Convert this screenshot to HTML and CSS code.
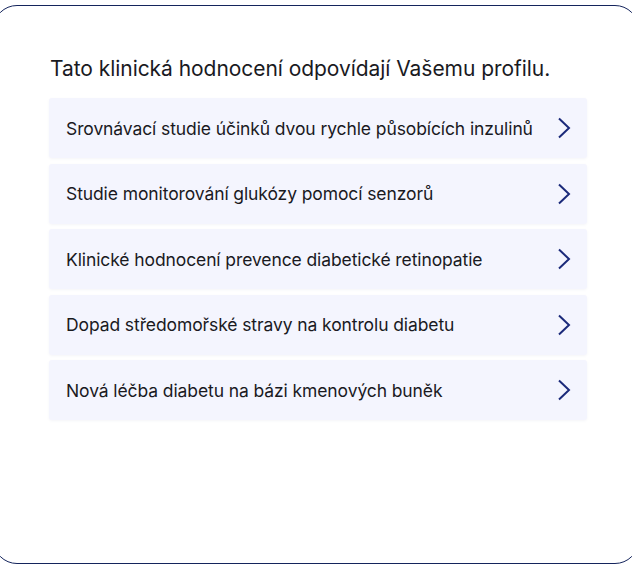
FILE: index.html
```html
<!DOCTYPE html>
<html lang="cs">
<head>
<meta charset="utf-8">
<link rel="stylesheet" href="styles.css">
</head>
<body>
<div class="card">
  <h1 class="title">Tato klinická hodnocení odpovídají Vašemu profilu.</h1>
  <ul class="list">
    <li class="item"><span>Srovnávací studie účinků dvou rychle působících inzulinů</span><svg class="chev" width="14" height="22" viewBox="0 0 14 22"><path d="M2 1.5 L12 11 L2 20.5" fill="none" stroke="#1b2a7a" stroke-width="2"/></svg></li>
    <li class="item"><span>Studie monitorování glukózy pomocí senzorů</span><svg class="chev" width="14" height="22" viewBox="0 0 14 22"><path d="M2 1.5 L12 11 L2 20.5" fill="none" stroke="#1b2a7a" stroke-width="2"/></svg></li>
    <li class="item"><span>Klinické hodnocení prevence diabetické retinopatie</span><svg class="chev" width="14" height="22" viewBox="0 0 14 22"><path d="M2 1.5 L12 11 L2 20.5" fill="none" stroke="#1b2a7a" stroke-width="2"/></svg></li>
    <li class="item"><span>Dopad středomořské stravy na kontrolu diabetu</span><svg class="chev" width="14" height="22" viewBox="0 0 14 22"><path d="M2 1.5 L12 11 L2 20.5" fill="none" stroke="#1b2a7a" stroke-width="2"/></svg></li>
    <li class="item"><span>Nová léčba diabetu na bázi kmenových buněk</span><svg class="chev" width="14" height="22" viewBox="0 0 14 22"><path d="M2 1.5 L12 11 L2 20.5" fill="none" stroke="#1b2a7a" stroke-width="2"/></svg></li>
  </ul>
</div>
</body>
</html>
```
FILE: styles.css
```css
html, body {
  margin: 0;
  padding: 0;
  background: #ffffff;
  overflow: hidden;
}
body {
  font-family: Inter, "Noto Sans", sans-serif;
  color: #1a1a1f;
}
.card {
  box-sizing: border-box;
  margin: 5px -7px 0 -7px;
  height: 559px;
  border: 1.5px solid #14245c;
  border-radius: 24px;
  padding: 49px 45px 0 55px;
  background: #fff;
}
.title {
  margin: 0 0 15px 1px;
  font-size: 21px;
  font-weight: 400;
  line-height: 28px;
  letter-spacing: -0.05px;
}
.list {
  list-style: none;
  margin: 0;
  padding: 0;
  display: flex;
  flex-direction: column;
  gap: 5.5px;
  width: 538px;
}
.item {
  height: 60px;
  box-sizing: border-box;
  display: flex;
  align-items: center;
  justify-content: space-between;
  padding: 0 16px 0 17px;
  background: #f4f5fe;
  border-radius: 3px;
  box-shadow: 0 1px 3px rgba(40, 50, 120, 0.05);
  font-size: 17.5px;
  letter-spacing: -0.1px;
}
.chev {
  display: block;
}
```
